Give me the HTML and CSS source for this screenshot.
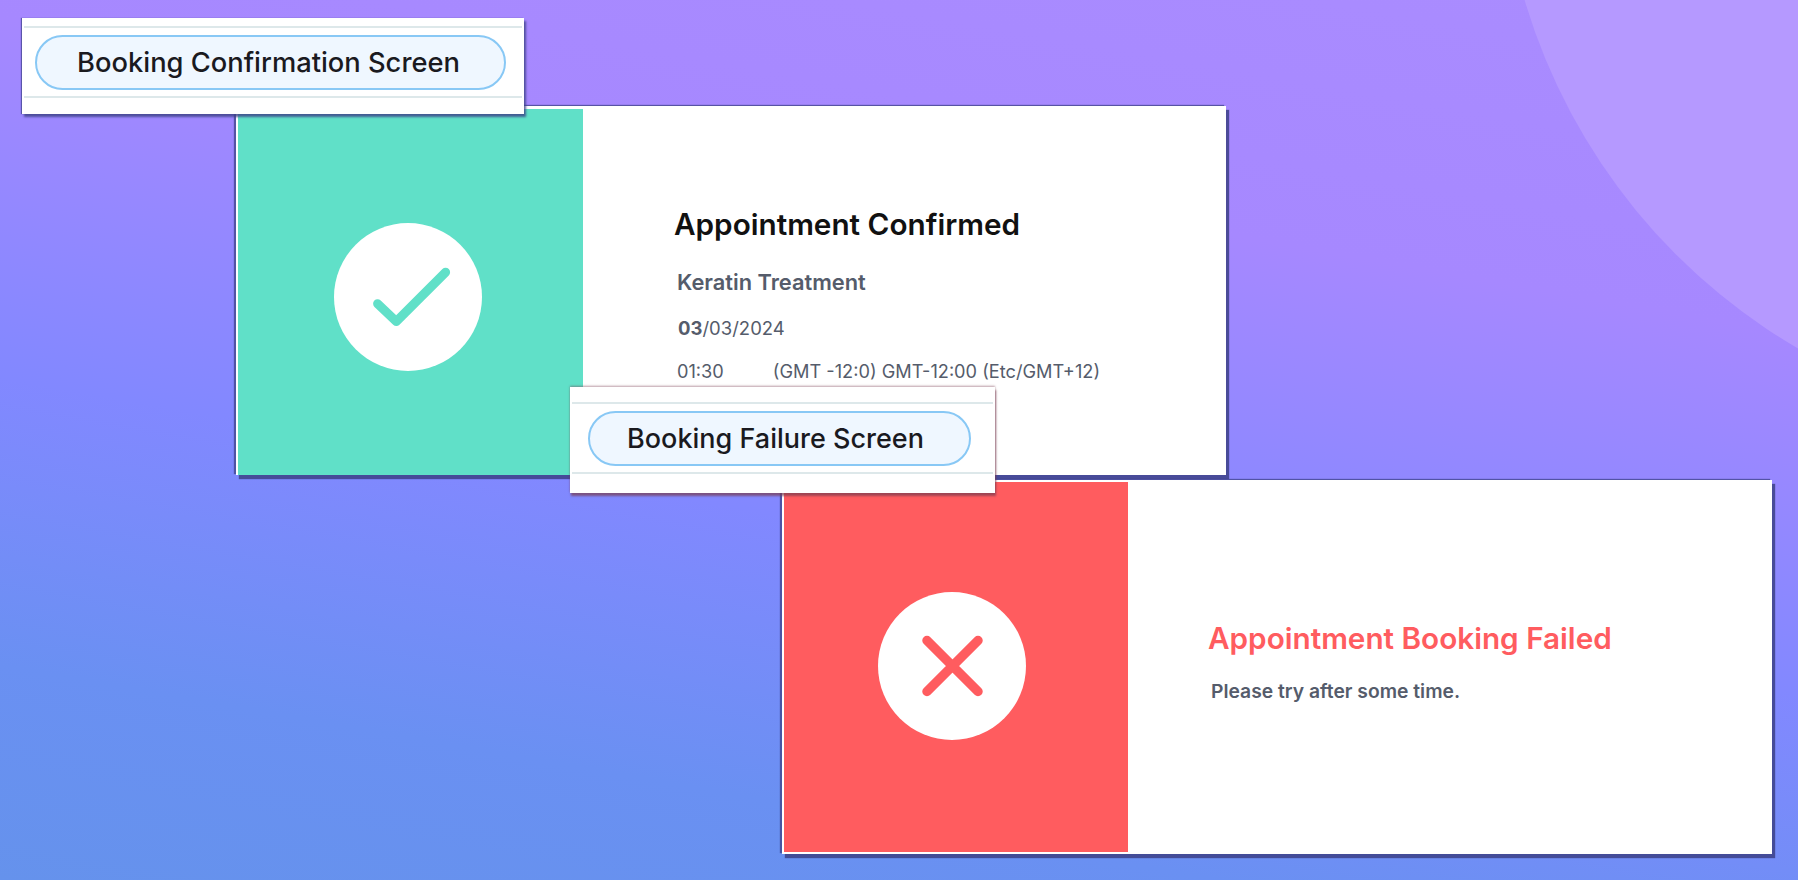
FILE: index.html
```html
<!DOCTYPE html>
<html lang="en">
<head>
    <meta charset="UTF-8">
    <title>Booking screens</title>
    <link rel="stylesheet" href="styles.css">
</head>
<body>
    <div class="canvas">
        <div class="blob"></div>

        <div class="card card-success">
            <div class="side side-success">
                <div class="badge">
                    <svg width="148" height="148" viewBox="0 0 148 148">
                        <path d="M43.6 80.7 L62.3 98.5 L111.6 49.3" fill="none" stroke="#60e0c8" stroke-width="9" stroke-linecap="round" stroke-linejoin="round"/>
                    </svg>
                </div>
            </div>
            <div class="body body-success">
                <h2 class="title">Appointment Confirmed</h2>
                <p class="service">Keratin Treatment</p>
                <p class="date"><b>03</b>/03/2024</p>
                <p class="time"><span>01:30</span><span>(GMT -12:0) GMT-12:00 (Etc/GMT+12)</span></p>
            </div>
        </div>

        <div class="card card-failure">
            <div class="side side-failure">
                <div class="badge">
                    <svg width="148" height="148" viewBox="0 0 148 148">
                        <path d="M49 48.5 L100 99.5 M100 48.5 L49 99.5" fill="none" stroke="#ff5c5f" stroke-width="9.5" stroke-linecap="round"/>
                    </svg>
                </div>
            </div>
            <div class="body body-failure">
                <h2 class="title title-failed">Appointment Booking Failed</h2>
                <p class="service service-failed">Please try after some time.</p>
            </div>
        </div>

        <div class="tag tag-confirm"><div class="pill">Booking Confirmation Screen</div></div>
        <div class="tag tag-fail"><div class="pill">Booking Failure Screen</div></div>
    </div>
</body>
</html>
```

FILE: styles.css
```css
* {
    box-sizing: border-box;
}
body {
    margin: 0;
    font-family: Inter, "Liberation Sans", sans-serif;
}
.canvas {
    position: relative;
    width: 1798px;
    height: 880px;
    overflow: hidden;
    background: linear-gradient(190deg, #aa8cff 0%, #a688ff 28%, #8288ff 58%, #6a90f2 82%, #6592ec 100%);
}
.blob {
    position: absolute;
    left: 1500px;
    top: -770px;
    width: 1200px;
    height: 1200px;
    border-radius: 50%;
    background-color: #b599ff;
}

/* windows on the canvas */
.card {
    position: absolute;
    display: flex;
    background-color: #fff;
    box-shadow: 3px 4px 1px rgba(60, 65, 135, 0.85), -2px -1px 1px rgba(60, 65, 135, 0.75);
}
.card-success {
    left: 236px;
    top: 106px;
    width: 990px;
    height: 369px;
    padding: 3px 0 0 2px;
}
.card-failure {
    left: 782px;
    top: 480px;
    width: 990px;
    height: 374px;
    padding: 2px 0 2px 2px;
}
.side {
    display: flex;
    align-items: center;
    justify-content: center;
    flex: none;
}
.side-success {
    width: 345px;
    padding: 10px 6px 0 0;
    background-color: #60e0c8;
}
.side-failure {
    width: 344px;
    padding: 0 8px 3px 0;
    background-color: #ff5c5f;
}
.badge {
    width: 148px;
    height: 148px;
    border-radius: 50%;
    background-color: #fff;
}
.badge svg {
    display: block;
}
.body {
    flex: 1;
    display: flex;
    flex-direction: column;
    align-items: flex-start;
}
.body-success {
    padding: 97px 0 0 91px;
}
.body-failure {
    padding: 138px 0 0 80px;
}
.title {
    margin: 0;
    font-size: 29.7px;
    line-height: 36px;
    font-weight: 600;
    color: #111;
}
.title-failed {
    color: #ff5c5f;
}
.service {
    margin: 27px 0 0 3px;
    font-size: 21.8px;
    line-height: 26px;
    font-weight: 600;
    color: #555c6b;
}
.service-failed {
    margin-top: 22px;
    font-size: 19.3px;
}
.date {
    margin: 22px 0 0 4px;
    font-size: 18.5px;
    line-height: 22px;
    color: #555c6b;
}
.date b {
    font-weight: 700;
}
.time {
    display: flex;
    gap: 49px;
    margin: 21px 0 0 3px;
    font-size: 18.2px;
    line-height: 22px;
    color: #555c6b;
}

/* labels that sit over the cards */
.tag {
    position: absolute;
    display: flex;
    align-items: center;
    justify-content: center;
    background-color: #fff;
    box-shadow: 2px 3px 2px rgba(60, 65, 135, 0.8), -1px 0 1px rgba(60, 65, 135, 0.7);
    height: 96px;
}
.tag::before,
.tag::after {
    content: "";
    position: absolute;
    left: 2px;
    right: 2px;
    height: 2px;
    background-color: #dde8ea;
}
.tag::before {
    top: 8px;
}
.tag::after {
    bottom: 16px;
}
.tag-confirm {
    left: 22px;
    top: 18px;
    width: 502px;
    padding: 0 18px 8px 13px;
}
.tag-fail {
    left: 570px;
    top: 387px;
    width: 425px;
    height: 106px;
    padding: 0 24px 3px 18px;
    box-shadow: 1px 3px 2px rgba(120, 60, 80, 0.7), 0 -1px 2px rgba(120, 60, 80, 0.5);
}
.tag-fail::before {
    top: 15px;
}
.tag-fail::after {
    bottom: 19px;
}
.pill {
    width: 100%;
    height: 55px;
    display: flex;
    align-items: center;
    justify-content: center;
    padding-right: 4px;
    border: 2px solid #88c8f5;
    border-radius: 28px;
    background-color: #eff7ff;
    font-size: 27.3px;
    font-weight: 500;
    color: #1a1a1f;
}
.tag-fail .pill {
    padding-right: 8px;
    font-size: 27px;
}
```
